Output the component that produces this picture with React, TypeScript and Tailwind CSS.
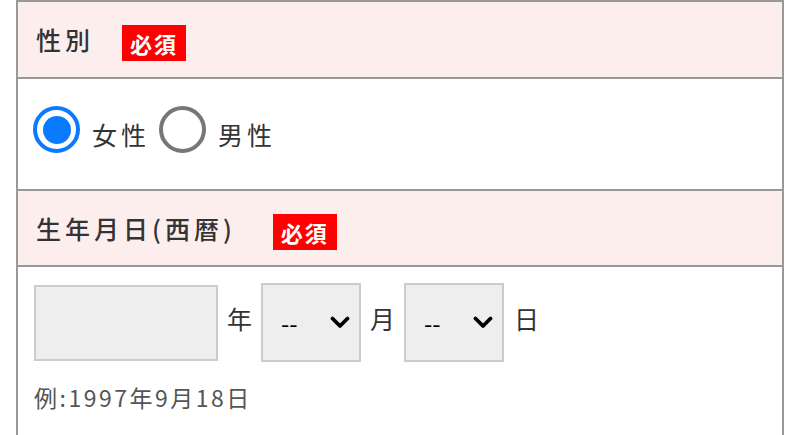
import React from "react";

function Chevron() {
  return (
    <svg width="20" height="13" viewBox="0 0 20 13" className="block">
      <path d="M2.5 2.5 L10 10 L17.5 2.5" fill="none" stroke="#000" strokeWidth="3.8" strokeLinecap="round" strokeLinejoin="round" />
    </svg>
  );
}

function Badge({ wide }: { wide?: boolean }) {
  return (
    <span
      className={
        wide
          ? "ml-[37px] mt-[7px] flex h-[36px] w-[64px] items-center justify-center bg-[#ff0000] text-[22px] font-bold leading-none tracking-[2px] text-white"
          : "ml-[28px] mt-[7px] flex h-[36px] w-[64px] items-center justify-center bg-[#ff0000] text-[22px] font-bold leading-none tracking-[2px] text-white"
      }
    >
      必須
    </span>
  );
}

function SelectBox() {
  return (
    <div className="flex h-[79px] w-[100px] items-center justify-between border-2 border-[#cccccc] bg-[#eeeeee] pl-[18px] pr-[9px]">
      <span className="mt-[1px] text-[24px] leading-none text-black">--</span>
      <Chevron />
    </div>
  );
}

export default function App() {
  return (
    <div className="h-[435px] w-[800px] overflow-hidden bg-white px-4 font-['Noto_Sans_CJK_JP',sans-serif] text-[#333333]">
      <div className="border-x-2 border-t-2 border-[#999999]">
        <div className="flex h-[77px] items-center border-b-2 border-[#999999] bg-[#fdeeee] px-[18px]">
          <span className="text-[25px] font-medium leading-none tracking-[4px]">性別</span>
          <Badge />
        </div>
        <div className="flex h-[112px] items-start border-b-2 border-[#999999] pl-[15px] pt-[27px]">
          <div className="flex h-[47px] w-[47px] items-center justify-center rounded-full border-4 border-[#0a7bff]">
            <div className="h-[28px] w-[28px] rounded-full bg-[#0a7bff]" />
          </div>
          <span className="ml-[12px] mt-[10px] text-[25px] leading-[36px] tracking-[4px]">女性</span>
          <div className="ml-[9px] h-[47px] w-[47px] rounded-full border-4 border-[#777777]" />
          <span className="ml-[12px] mt-[10px] text-[25px] leading-[36px] tracking-[4px]">男性</span>
        </div>
        <div className="flex h-[76px] items-center border-b-2 border-[#999999] bg-[#fdeeee] px-[18px]">
          <span className="text-[25px] font-medium leading-none tracking-[4px]">生年月日(西暦)</span>
          <Badge wide />
        </div>
        <div className="h-[200px] px-[16px] pt-[16px]">
          <div className="flex items-center">
            <div className="h-[76px] w-[184px] border-2 border-[#cccccc] bg-[#eeeeee]" />
            <span className="mx-[9px] mb-[8px] text-[25px] leading-none">年</span>
            <SelectBox />
            <span className="mx-[9px] mb-[8px] text-[25px] leading-none">月</span>
            <SelectBox />
            <span className="mx-[10px] mb-[8px] text-[25px] leading-none">日</span>
          </div>
          <div className="mt-[19px] text-[23px] leading-[32px] tracking-[2.5px] text-[#555555]">例:1997年9月18日</div>
        </div>
      </div>
    </div>
  );
}
